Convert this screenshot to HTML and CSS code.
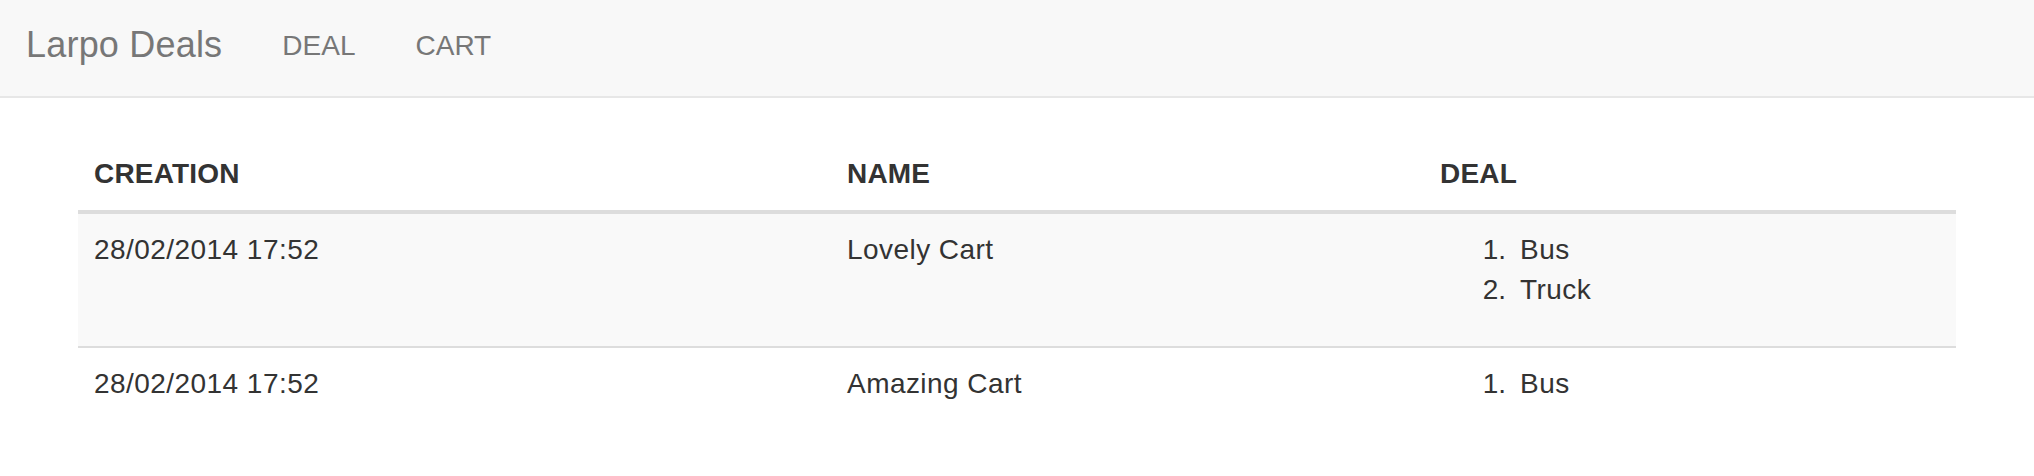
FILE: index.html
```html
<!DOCTYPE html>
<html lang="en">
<head>
<meta charset="utf-8">
<title>Larpo Deals</title>
<link rel="stylesheet" href="styles.css">
</head>
<body>
<nav class="navbar">
  <a class="brand" href="#">Larpo Deals</a>
  <ul class="nav">
    <li><a href="#">DEAL</a></li>
    <li><a href="#">CART</a></li>
  </ul>
</nav>
<main class="content">
  <table class="table">
    <colgroup>
      <col class="col-creation">
      <col class="col-name">
      <col class="col-deal">
    </colgroup>
    <thead>
      <tr>
        <th>CREATION</th>
        <th>NAME</th>
        <th>DEAL</th>
      </tr>
    </thead>
    <tbody>
      <tr class="stripe">
        <td>28/02/2014 17:52</td>
        <td>Lovely Cart</td>
        <td>
          <ol class="deals">
            <li>Bus</li>
            <li>Truck</li>
          </ol>
        </td>
      </tr>
      <tr>
        <td>28/02/2014 17:52</td>
        <td>Amazing Cart</td>
        <td>
          <ol class="deals">
            <li>Bus</li>
          </ol>
        </td>
      </tr>
    </tbody>
  </table>
</main>
</body>
</html>
```

FILE: styles.css
```css
* {
  box-sizing: border-box;
}

html, body {
  margin: 0;
  padding: 0;
  background: #ffffff;
}

body {
  font-family: "Liberation Sans", Arial, Helvetica, sans-serif;
  font-size: 28px;
  line-height: 40px;
  color: #333333;
}

a {
  text-decoration: none;
}

.navbar {
  display: flex;
  align-items: flex-start;
  height: 98px;
  background: #f8f8f8;
  border-bottom: 2px solid #e7e7e7;
}

.brand {
  display: block;
  font-size: 36px;
  line-height: 40px;
  padding: 25px 30px 0 26px;
  color: #777777;
  letter-spacing: 0.2px;
}

.nav {
  display: flex;
  list-style: none;
  margin: 0;
  padding: 0;
}

.nav li a {
  display: block;
  font-size: 28px;
  line-height: 32px;
  padding: 30px 30px 0 30px;
  color: #777777;
}

.content {
  padding: 40px 78px 0 78px;
}

.table {
  width: 100%;
  table-layout: fixed;
  border-collapse: collapse;
  border-spacing: 0;
  margin-bottom: 40px;
}

.col-creation {
  width: 753px;
}

.col-name {
  width: 593px;
}

.table th {
  text-align: left;
  font-weight: bold;
  vertical-align: bottom;
  padding: 16px;
  border-bottom: 4px solid #dddddd;
  letter-spacing: 0.2px;
}

.table td {
  vertical-align: top;
  padding: 16px;
  letter-spacing: 0.45px;
}

.table tbody tr + tr td {
  border-top: 2px solid #dddddd;
}

.stripe td {
  background: #f9f9f9;
}

.deals {
  margin: 0 0 20px 0;
  padding: 0 0 0 80px;
}

.deals li::marker {
  content: counter(list-item) ".\2002";
  letter-spacing: 0;
}
```
